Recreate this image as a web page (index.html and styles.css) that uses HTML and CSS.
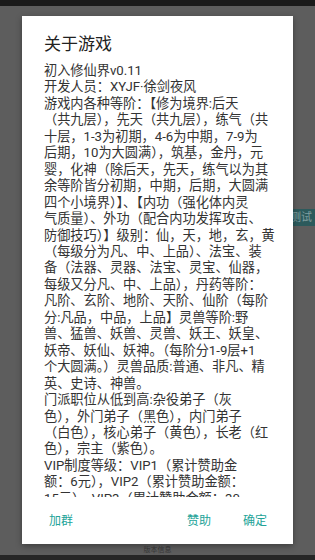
FILE: index.html
```html
<!DOCTYPE html>
<html lang="zh-CN">
<head>
<meta charset="utf-8">
<title>关于游戏</title>
<link rel="stylesheet" href="styles.css">
</head>
<body>
<div class="statusbar"></div>
<main class="stage">
  <div class="behind-btn">测试</div>
  <section class="dialog">
    <h2 class="title">关于游戏</h2>
    <div class="content">
      <p>初入修仙界v0.11<br>开发人员：XYJF·徐剑夜风<br>游戏内各种等阶：【修为境界:后天<br>（共九层），先天（共九层），练气（共<br>十层，1-3为初期，4-6为中期，7-9为<br>后期，10为大圆满），筑基，金丹，元<br>婴，化神（除后天，先天，练气以为其<br>余等阶皆分初期，中期，后期，大圆满<br>四个小境界）】、【内功（强化体内灵<br>气质量）、外功（配合内功发挥攻击、<br>防御技巧）】级别：仙，天，地，玄，黄<br>（每级分为凡、中、上品）、法宝、装<br>备（法器、灵器、法宝、灵宝、仙器，<br>每级又分凡、中、上品），丹药等阶：<br>凡阶、玄阶、地阶、天阶、仙阶（每阶<br>分:凡品，中品，上品】灵兽等阶:野<br>兽、猛兽、妖兽、灵兽、妖王、妖皇、<br>妖帝、妖仙、妖神。（每阶分1-9层+1<br>个大圆满。）灵兽品质:普通、非凡、精<br>英、史诗、神兽。<br>门派职位从低到高:杂役弟子（灰<br>色），外门弟子（黑色），内门弟子<br>（白色），核心弟子（黄色），长老（红<br>色），宗主（紫色）。<br>VIP制度等级：VIP1（累计赞助金<br>额：6元），VIP2（累计赞助金额：<br>15元），VIP3（累计赞助金额：30</p>
    </div>
    <div class="actions">
      <button class="btn">加群</button>
      <span class="spacer"></span>
      <button class="btn">赞助</button>
      <button class="btn">确定</button>
    </div>
  </section>
  <div class="footer-note">版本信息</div>
</main>
<div class="navbar"></div>
</body>
</html>
```

FILE: styles.css
```css
html, body {
  margin: 0;
  padding: 0;
}
body {
  width: 315px;
  height: 560px;
  overflow: hidden;
  background: #5d5d5d;
  font-family: Roboto, "Noto Sans CJK SC", sans-serif;
  display: flex;
  flex-direction: column;
}
.statusbar {
  height: 6px;
  background: #1a1a1a;
  flex: none;
}
.stage {
  position: relative;
  flex: 1;
  display: flex;
  flex-direction: column;
  align-items: center;
  padding-top: 10px;
}
.behind-btn {
  position: absolute;
  left: 284px;
  top: 203px;
  width: 44px;
  height: 17px;
  background: #2c5a5c;
  color: #7f9ea0;
  font-size: 11px;
  line-height: 17px;
  padding-left: 6px;
  box-sizing: border-box;
}
.dialog {
  position: relative;
  z-index: 1;
  width: 271px;
  height: 528px;
  background: #ffffff;
  box-shadow: 0 2px 6px rgba(0, 0, 0, 0.35);
  display: flex;
  flex-direction: column;
}
.title {
  margin: 0;
  padding: 17px 22px 0;
  font-size: 17px;
  line-height: 22px;
  font-weight: normal;
  color: #212121;
}
.content {
  height: 442px;
  box-sizing: border-box;
  padding: 8px 20px 0 22px;
  overflow: hidden;
  flex: none;
}
.content p {
  margin: 0;
  font-size: 13.2px;
  line-height: 16.46px;
  color: #333333;
  white-space: nowrap;
}
.actions {
  height: 47px;
  display: flex;
  align-items: center;
  padding: 0 26px 0 27px;
  gap: 32px;
  flex: none;
}
.spacer {
  flex: 1;
}
.btn {
  background: none;
  border: none;
  padding: 0;
  margin: 0;
  font-family: Roboto, "Noto Sans CJK SC", sans-serif;
  font-size: 12px;
  line-height: 16px;
  color: #22a398;
}
.footer-note {
  margin-top: 2px;
  font-size: 7px;
  line-height: 9px;
  color: #383838;
}
.navbar {
  height: 7px;
  background: #262626;
  flex: none;
}
```
